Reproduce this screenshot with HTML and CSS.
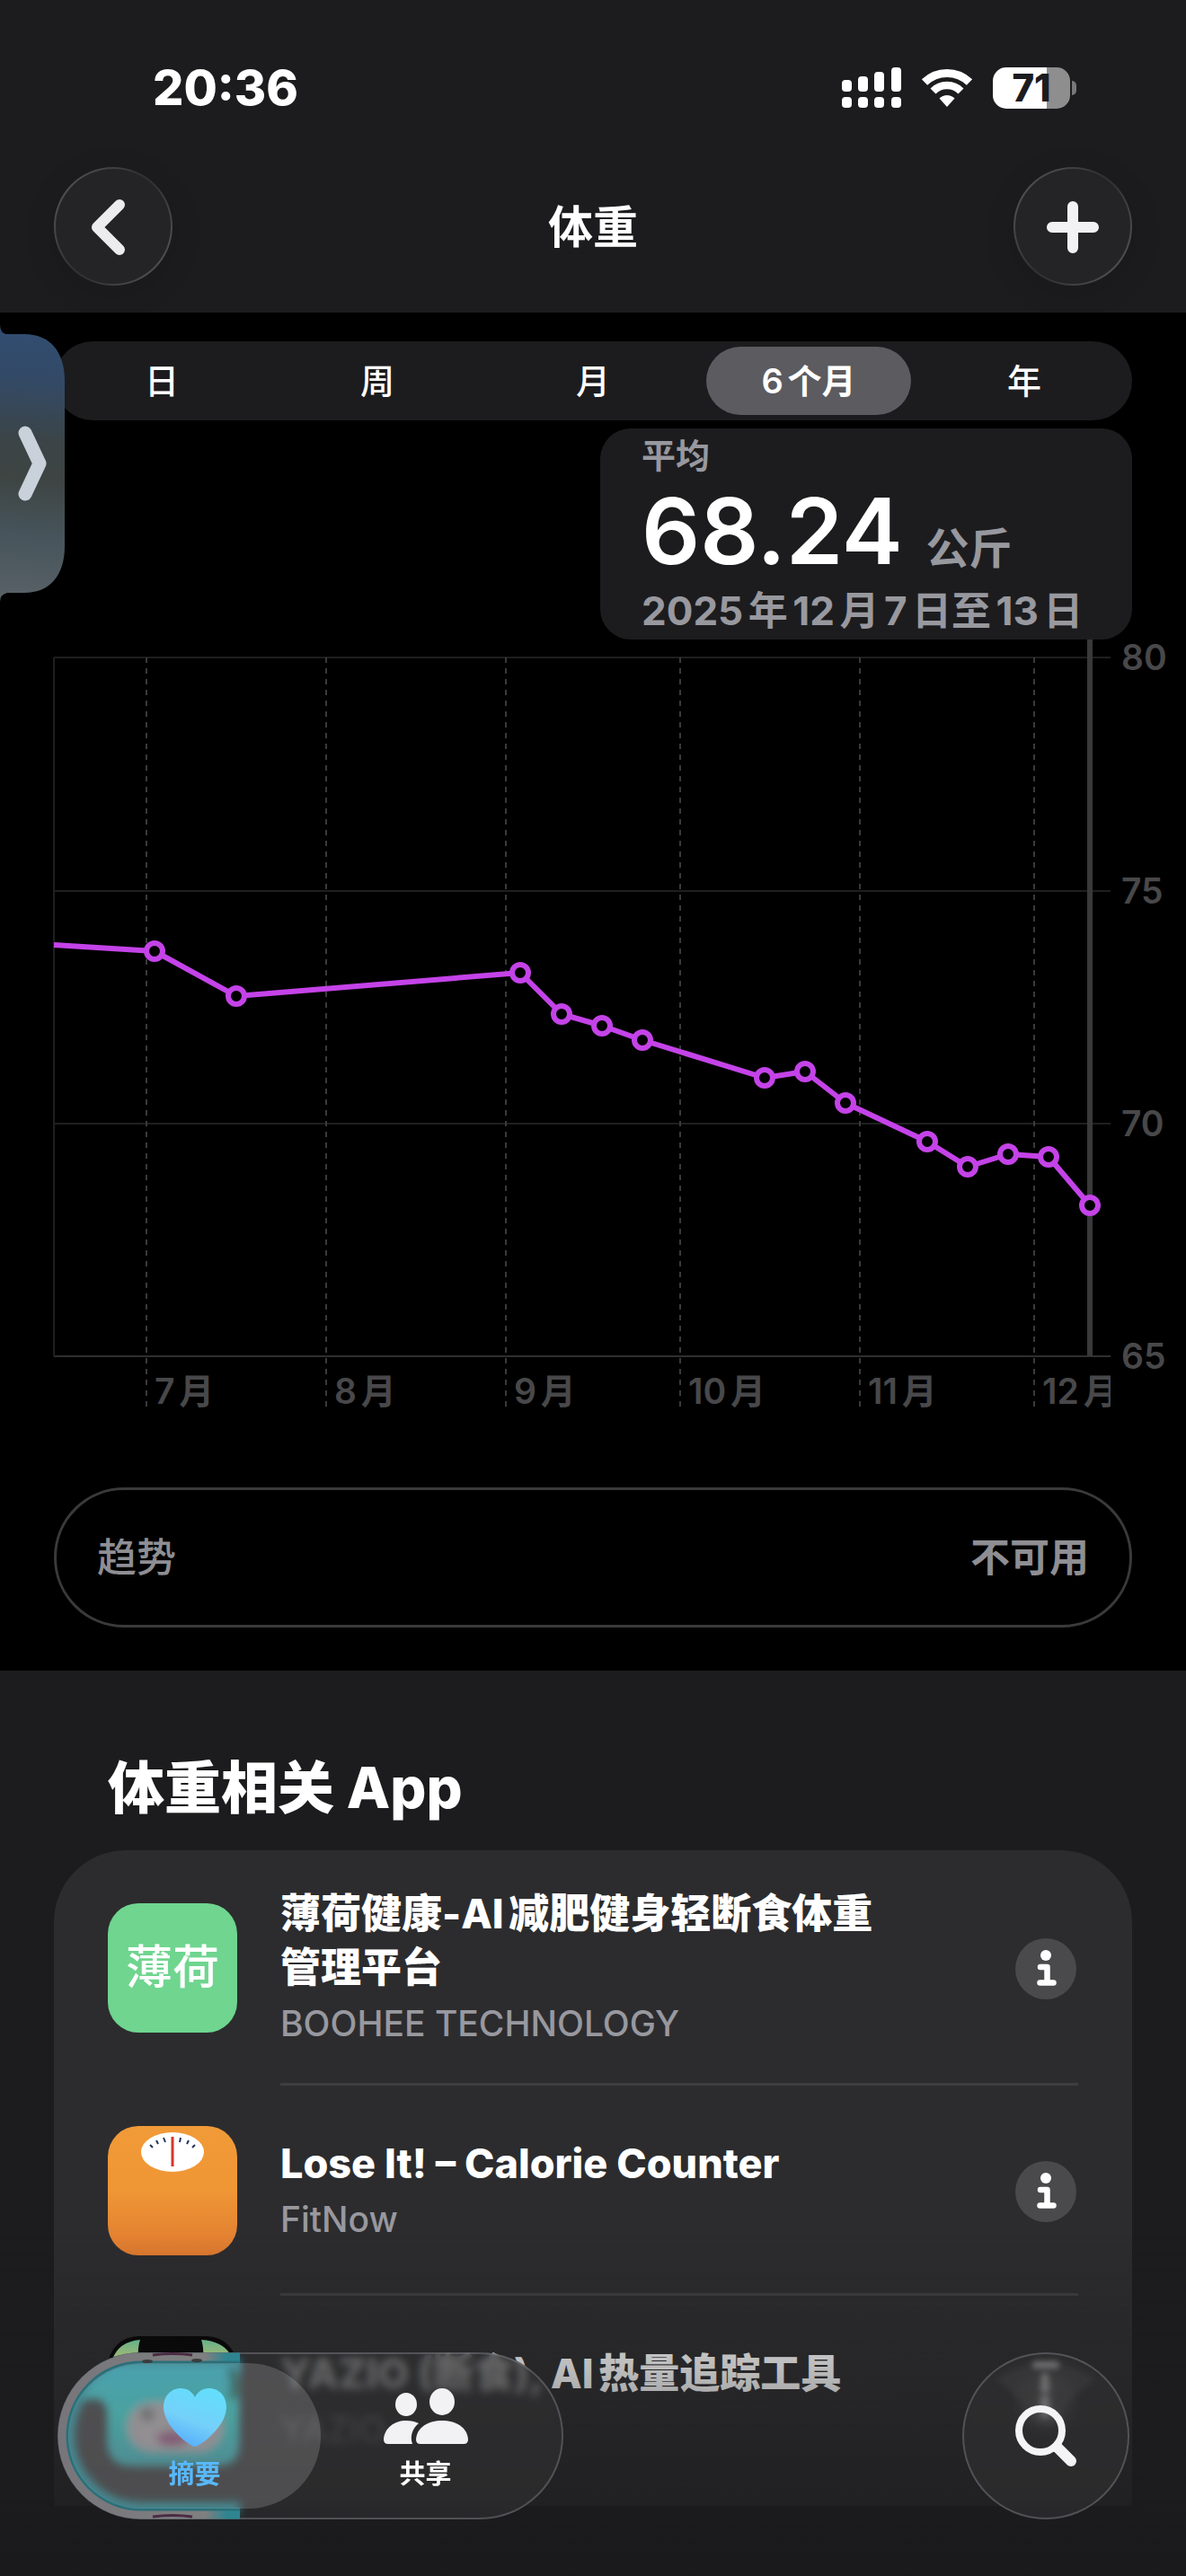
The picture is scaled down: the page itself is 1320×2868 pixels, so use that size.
FILE: index.html
```html
<!DOCTYPE html>
<html lang="zh-CN">
<head>
<meta charset="utf-8">
<meta name="viewport" content="width=device-width, initial-scale=1">
<title>体重</title>
<link rel="stylesheet" href="styles.css">
</head>
<body>
<header class="top">
  <div class="status">
    <time class="clock">20:36</time>
    <div class="status-icons">
      <svg width="66" height="46" viewBox="0 0 66 46" fill="#fff" aria-hidden="true">
        <rect x="0" y="14" width="11" height="13" rx="4"/><rect x="18" y="10" width="11" height="17" rx="4"/><rect x="36" y="5" width="11" height="22" rx="4"/><rect x="55" y="0" width="11" height="27" rx="4"/>
        <rect x="0" y="33" width="11" height="12" rx="4"/><rect x="18" y="33" width="11" height="12" rx="4"/><rect x="36" y="33" width="11" height="12" rx="4"/><rect x="55" y="33" width="11" height="12" rx="4"/>
      </svg>
      <svg width="58" height="44" viewBox="0 0 58 44" aria-hidden="true">
        <path d="M4 15.500a36 36 0 0 1 50 0" fill="none" stroke="#fff" stroke-width="9"/>
        <path d="M13.500 25.500a22 22 0 0 1 31 0" fill="none" stroke="#fff" stroke-width="8.500"/>
        <path d="M29 43 L20.500 33.500a12 12 0 0 1 17 0Z" fill="#fff"/>
      </svg>
      <div class="battery"><span class="battery-body">71</span><span class="battery-tip"></span></div>
    </div>
  </div>
  <div class="nav">
    <button class="round" aria-label="返回">
      <svg width="132" height="132" viewBox="0 0 132 132" fill="none" stroke="#ececee" stroke-width="12" stroke-linecap="round" stroke-linejoin="round"><path d="M73 42 L48 67 L73 92"/></svg>
    </button>
    <h1 class="nav-title">体重</h1>
    <button class="round" aria-label="添加">
      <svg width="132" height="132" viewBox="0 0 132 132" fill="none" stroke="#f2f2f5" stroke-width="12" stroke-linecap="round"><path d="M66 44v46M43 67h46"/></svg>
    </button>
  </div>
</header>

<main>
  <section class="chart-section">
    <div class="segments" role="group" aria-label="时间范围">
      <button class="segment">日</button>
      <button class="segment">周</button>
      <button class="segment">月</button>
      <button class="segment selected" aria-pressed="true">6个月</button>
      <button class="segment">年</button>
    </div>
    <div class="callout">
      <p class="callout-label">平均</p>
      <p class="callout-value">68.24 <span class="unit">公斤</span></p>
      <p class="callout-date">2025年12月7日至13日</p>
    </div>
    <svg class="chart" viewBox="0 0 1320 860" role="img" aria-label="体重折线图">
      <defs><clipPath id="plot"><rect x="60" y="0" width="1176" height="862"/></clipPath></defs>
      <g class="grid">
        <path d="M60 20H1236M60 280H1236M60 539H1236"/>
        <path class="base" d="M60 798H1236"/>
        <path d="M60 20V798"/>
      </g>
      <path class="months" d="M163 20V860M363 20V860M563 20V860M757 20V860M957 20V860M1151 20V860"/>
      <path class="cursor" d="M1213 0V798"/>
      <polyline class="line" points="60,340 172,347 263,397 579,371 625,417 670,430 715,446 851,488 896,481 941,516 1032,559 1077,587 1122,573 1167,576 1213,630"/>
      <g class="dots">
        <circle cx="172" cy="347" r="9"/><circle cx="263" cy="397" r="9"/><circle cx="579" cy="371" r="9"/><circle cx="625" cy="417" r="9"/><circle cx="670" cy="430" r="9"/><circle cx="715" cy="446" r="9"/><circle cx="851" cy="488" r="9"/><circle cx="896" cy="481" r="9"/><circle cx="941" cy="516" r="9"/><circle cx="1032" cy="559" r="9"/><circle cx="1077" cy="587" r="9"/><circle cx="1122" cy="573" r="9"/><circle cx="1167" cy="576" r="9"/><circle cx="1213" cy="630" r="9"/>
      </g>
      <g class="axis">
        <text x="1248" y="34">80</text><text x="1248" y="294">75</text><text x="1248" y="553">70</text><text x="1248" y="812">65</text>
      </g>
      <g class="axis" clip-path="url(#plot)">
        <text x="172" y="851">7月</text><text x="372" y="851">8月</text><text x="572" y="851">9月</text><text x="766" y="851">10月</text><text x="966" y="851">11月</text><text x="1160" y="851">12月</text>
      </g>
    </svg>
    <button class="trend"><span>趋势</span><strong>不可用</strong></button>
  </section>

  <section class="apps">
    <h2 class="apps-title">体重相关 App</h2>
    <ul class="app-list">
      <li class="app">
        <div class="app-icon mint">薄荷</div>
        <div class="app-body">
          <div class="app-text">
            <h3 class="app-name">薄荷健康-AI减肥健身轻断食体重管理平台</h3>
            <p class="app-maker">BOOHEE TECHNOLOGY</p>
          </div>
          <button class="info" aria-label="薄荷健康信息"><svg width="68" height="68" viewBox="0 0 68 68"><circle cx="34" cy="19" r="6" fill="#fff"/><path d="M28 32h7.500v17M27.500 49.500h15" fill="none" stroke="#fff" stroke-width="6.500" stroke-linecap="round" stroke-linejoin="round"/></svg></button>
        </div>
      </li>
      <li class="app">
        <svg class="app-icon" viewBox="0 0 144 144" aria-hidden="true">
          <defs><linearGradient id="scale" x2="0" y2="1"><stop offset="0" stop-color="#f19a38"/><stop offset=".5" stop-color="#ef9635"/><stop offset="1" stop-color="#df7a30"/></linearGradient></defs>
          <rect width="144" height="144" fill="url(#scale)"/>
          <ellipse cx="72" cy="29" rx="35" ry="22" fill="#fff"/>
          <path d="M47 21l3 3M54 16l2 4M62 13l2 5M81 13l-1 5M90 16l-2 4M97 21l-3 3" stroke="#23355c" stroke-width="2"/>
          <path d="M72 12v33" stroke="#d8352c" stroke-width="3"/>
        </svg>
        <div class="app-body">
          <div class="app-text">
            <h3 class="app-name">Lose It! – Calorie Counter</h3>
            <p class="app-maker">FitNow</p>
          </div>
          <button class="info" aria-label="Lose It! 信息"><svg width="68" height="68" viewBox="0 0 68 68"><circle cx="34" cy="19" r="6" fill="#fff"/><path d="M28 32h7.500v17M27.500 49.500h15" fill="none" stroke="#fff" stroke-width="6.500" stroke-linecap="round" stroke-linejoin="round"/></svg></button>
        </div>
      </li>
      <li class="app">
        <svg class="app-icon" viewBox="0 0 144 144" aria-hidden="true">
          <defs><linearGradient id="ear" x2="0" y2="1"><stop offset="0" stop-color="#7be0aa"/><stop offset="1" stop-color="#dcf694"/></linearGradient></defs>
          <rect width="144" height="144" fill="#050505"/>
          <path d="M5 26Q12 6 36 4Q33 12 34 26Z" fill="url(#ear)"/>
          <path d="M139 26Q132 6 104 4Q107 12 106 26Z" fill="url(#ear)"/>
          <path d="M0 30H144V144H0Z" fill="#38b5bd"/>
          <ellipse cx="72" cy="92" rx="50" ry="36" fill="#a9a3a5"/>
          <ellipse cx="72" cy="112" rx="15" ry="9" fill="#97456f"/>
          <circle cx="48" cy="80" r="7" fill="#555"/><circle cx="98" cy="80" r="7" fill="#555"/>
        </svg>
        <div class="app-body">
          <div class="app-text">
            <h3 class="app-name">YAZIO (断食), AI热量追踪工具</h3>
            <p class="app-maker">YAZIO</p>
          </div>
          <button class="info" aria-label="YAZIO 信息"><svg width="68" height="68" viewBox="0 0 68 68"><circle cx="34" cy="19" r="6" fill="#fff"/><path d="M28 32h7.500v17M27.500 49.500h15" fill="none" stroke="#fff" stroke-width="6.500" stroke-linecap="round" stroke-linejoin="round"/></svg></button>
        </div>
      </li>
    </ul>
  </section>
</main>

<button class="drawer" aria-label="展开侧栏">
  <svg width="72" height="312" viewBox="0 0 72 312">
    <defs><linearGradient id="drawer" gradientUnits="userSpaceOnUse" x1="36" y1="0" x2="16" y2="312"><stop offset="0" stop-color="#314d72"/><stop offset=".2" stop-color="#334a66"/><stop offset=".42" stop-color="#3b4447"/><stop offset=".55" stop-color="#3e4442"/><stop offset=".75" stop-color="#46545b"/><stop offset="1" stop-color="#5a6267"/></linearGradient></defs>
    <path d="M0 0Q0 12 8 12H27C56 12 72 32 72 64V248C72 280 56 300 27 300H8Q0 302 0 310Z" fill="url(#drawer)"/>
    <path d="M28 122L44 156L28 190" fill="none" stroke="#c9d1da" stroke-width="15" stroke-linecap="round" stroke-linejoin="round"/>
  </svg>
</button>

<div class="fade"></div>
<div class="dock">
  <nav class="tabs" aria-label="标签栏">
    <svg class="lens" viewBox="0 0 563 186" aria-hidden="true">
      <defs>
        <filter id="soft" x="-20%" y="-20%" width="140%" height="140%"><feGaussianBlur stdDeviation="5"/></filter>
        <linearGradient id="rim" gradientUnits="userSpaceOnUse" x1="0" y1="0" x2="205" y2="0"><stop offset="0" stop-color="#77757a"/><stop offset=".8" stop-color="#7f7f80"/><stop offset=".92" stop-color="#2e8590"/><stop offset="1" stop-color="#2e8590"/></linearGradient>
        <linearGradient id="pelt" x2="0" y2="1"><stop offset="0" stop-color="#268d9f"/><stop offset=".5" stop-color="#268f8c"/><stop offset="1" stop-color="#2b757c"/></linearGradient>
      </defs>
      <path d="M203 12H93A81 81 0 0 0 93 174H203" fill="none" stroke="#24727c" stroke-width="14" filter="url(#soft)"/>
      <g filter="url(#soft)">
        <path d="M66 12H202V104Q202 126 178 126H82Q58 126 56 104V66Q54 48 26 52Q36 24 66 12Z" fill="url(#pelt)"/>
        <path d="M192 18q8 12 3 34" fill="none" stroke="#1b4738" stroke-width="9"/>
        <rect x="78" y="56" width="106" height="54" rx="27" fill="#7c787b"/>
        <circle cx="100" cy="69" r="8" fill="#545456"/><circle cx="156" cy="69" r="8" fill="#545456"/>
        <ellipse cx="128" cy="96" rx="18" ry="9" fill="#6b3e5c"/>
      </g>
      <path d="M203 10H93A83 83 0 0 0 93 176H203" fill="none" stroke="#2a6f79" stroke-width="6"/>
      <path d="M203 5H93A88 88 0 0 0 93 181H203" fill="none" stroke="url(#rim)" stroke-width="9"/>
      <path d="M106 3q22 -3 44 0M106 183q22 -3 44 0" fill="none" stroke="#4a2b42" stroke-width="3"/>
      <ellipse cx="100" cy="10" rx="6" ry="2" fill="#3b3b3d"/><ellipse cx="155" cy="9" rx="6" ry="2" fill="#3b3b3d"/>
    </svg>
    <a class="tab current" href="#summary" aria-current="page">
      <svg width="94" height="66" viewBox="0 0 94 66" aria-hidden="true">
        <defs><linearGradient id="heart" x1=".8" x2=".4" y2="1"><stop offset="0" stop-color="#62dffc"/><stop offset=".6" stop-color="#74d0f9"/><stop offset="1" stop-color="#57aefb"/></linearGradient></defs>
        <path d="M47 65C42 65 12 43 12 21C12 9 20 0 31 0C39 0 44 4 47 10C50 4 55 0 63 0C74 0 82 9 82 21C82 43 52 65 47 65Z" fill="url(#heart)"/>
      </svg>
      <span>摘要</span>
    </a>
    <a class="tab" href="#sharing">
      <svg width="94" height="66" viewBox="0 0 94 66" fill="#f2f2f5" aria-hidden="true">
        <ellipse cx="25" cy="18" rx="12" ry="13"/><ellipse cx="65" cy="15" rx="14" ry="15"/>
        <path d="M5 62Q0 62 0 57C1 44 12 36 25 36Q33 36 39 39C32 45 29 53 32 62Z"/>
        <path d="M41 62Q36 62 36 57C37 43 50 36 65 36C80 36 93 43 94 57Q94 62 89 62Z"/>
      </svg>
      <span>共享</span>
    </a>
  </nav>
  <button class="search" aria-label="搜索">
    <svg width="186" height="186" viewBox="0 0 186 186" fill="none" aria-hidden="true">
      <defs><filter id="haze" x="-50%" y="-50%" width="200%" height="200%"><feGaussianBlur stdDeviation="3"/></filter></defs>
      <path d="M38 30Q93 -8 148 30L118 55Q112 80 93 82Q72 80 66 55Z" fill="#454547" opacity=".4" filter="url(#haze)"/>
      <path d="M82 14h22M92 27v14M92 52v16" stroke="#6e6e70" stroke-width="8" stroke-linecap="round" filter="url(#haze)"/>
      <g stroke="#f4f4f7" stroke-linecap="round"><circle cx="87" cy="87" r="24" stroke-width="8"/><path d="M106 106L121 121" stroke-width="12"/></g>
    </svg>
  </button>
</div>
</body>
</html>
```
FILE: styles.css
```css
* { box-sizing: border-box; }

body {
  margin: 0;
  min-height: 100vh;
  background: #1c1c1e;
  color: #fff;
  font-family: Inter, "Noto Sans CJK SC", sans-serif;
  text-autospace: normal;
}

h1, h2, h3, p, ul { margin: 0; padding: 0; }
ul { list-style: none; }
button { margin: 0; padding: 0; border: 0; background: none; color: inherit; font: inherit; text-autospace: inherit; }
a { color: inherit; text-decoration: none; }
svg { display: block; }

/* Status bar and navigation */
.top { padding: 54px 60px 30px; }
.status { display: flex; justify-content: space-between; align-items: center; height: 88px; padding: 0 62px 0 110px; }
.clock { font-size: 54px; font-weight: 800; line-height: 88px; }
.status-icons { display: flex; align-items: center; gap: 22px; }
.battery { display: flex; align-items: center; gap: 2px; }
.battery-body {
  width: 86px; height: 46px; border-radius: 15px;
  background: linear-gradient(90deg, #fff 70%, #8e8e8f 70%);
  color: #1c1c1e; font-size: 42px; font-weight: 800; line-height: 46px; text-align: center;
}
.battery-tip { width: 5px; height: 16px; border-radius: 0 5px 5px 0; background: #77777a; }
.nav { display: flex; justify-content: space-between; align-items: center; margin-top: 44px; }
.nav-title { padding-top: 2px; font-size: 50px; font-weight: 700; line-height: 60px; }
.round {
  width: 132px; height: 132px; border-radius: 50%; border: 2px solid transparent;
  background: linear-gradient(#242426, #242426) padding-box, linear-gradient(125deg, #5a5a5e, #323234 45%, #323234 55%, #5a5a5e) border-box;
  box-shadow: 0 8px 36px rgba(0, 0, 0, .12);
}
.round svg { margin: -2px; }

/* Chart */
.chart-section { padding: 32px 0 48px; background: #000; }
.segments { display: flex; height: 88px; margin: 0 60px; padding: 6px 0; border-radius: 44px; background: #1c1c1e; }
.segment { flex: 1; margin: 0 6px; border-radius: 38px; font-size: 38px; font-weight: 500; line-height: 76px; }
.segment.selected { background: #5b5b60; font-weight: 600; }
.callout { width: fit-content; min-width: 592px; margin: 9px 60px 0 auto; padding: 6px 46px 3px; border-radius: 34px; background: #1c1c1e; color: #98989f; font-weight: 700; }
.callout-label { font-size: 38px; line-height: 48px; }
.callout-value { color: #fff; font-size: 102px; font-weight: 600; line-height: 120px; }
.unit { color: #98989f; font-size: 48px; line-height: 60px; }
.callout-date { font-size: 44px; line-height: 58px; white-space: nowrap; }
.chart { width: 100%; height: auto; overflow: visible; }
.grid { fill: none; stroke: #1f1f20; stroke-width: 2; }
.base { stroke: #2f2f31; }
.months { fill: none; stroke: #3a3a3c; stroke-width: 2; stroke-dasharray: 6 6; }
.cursor { stroke: #39393b; stroke-width: 6; }
.line { fill: none; stroke: #c443e8; stroke-width: 6; stroke-linejoin: round; }
.dots { fill: #000; stroke: #c443e8; stroke-width: 6; }
.axis { fill: #48484a; font-size: 39px; font-weight: 600; }
.trend {
  display: flex; justify-content: space-between; align-items: center;
  width: calc(100% - 120px); height: 156px; margin: 84px 60px 0; padding: 0 45px;
  border: 3px solid #3a3a3c; border-radius: 78px; color: #8e8e93; font-size: 44px; font-weight: 500; line-height: 50px;
}
.trend strong { font-weight: 700; }

/* Related apps */
.apps { padding: 90px 60px 78px; }
.apps-title { margin-bottom: 30px; padding-left: 60px; font-size: 63px; font-weight: 800; line-height: 80px; }
.app-list { border-radius: 80px 80px 0 0; background: #2c2c2e; }
.app { display: flex; align-items: center; gap: 48px; padding: 0 60px; }
.app-icon { flex: none; width: 144px; height: 144px; border-radius: 34px; }
.mint { background: #6fd58f; font-size: 52px; font-weight: 500; line-height: 144px; text-align: center; }
.app-body { display: flex; flex: 1; justify-content: space-between; align-items: center; min-height: 234px; padding: 41px 0 37px; border-bottom: 3px solid #3e3e40; }
.app:last-child .app-body { border-color: transparent; }
.app-text { max-width: 680px; }
.app-name { font-size: 45px; font-weight: 800; line-height: 60px; }
.app-maker { margin-top: 3px; color: #98989f; font-size: 39px; font-weight: 500; line-height: 58px; }
.info { flex: none; width: 68px; height: 68px; margin-right: 2px; border-radius: 50%; background: #4a4a4c; }

/* Floating layers */
.drawer { position: absolute; top: 360px; left: 0; }
.fade { position: fixed; right: 0; bottom: 0; left: 0; height: 380px; background: linear-gradient(rgba(28, 28, 30, 0), rgba(28, 28, 30, .3) 40%, rgba(28, 28, 30, .65) 75%, rgba(26, 26, 28, .9)); pointer-events: none; }
.dock { position: fixed; right: 63px; bottom: 63px; left: 64px; display: flex; justify-content: space-between; }
.tabs, .search {
  position: relative; height: 186px; border-radius: 93px; overflow: hidden;
  background: rgba(48, 48, 50, .62); backdrop-filter: blur(5px);
  box-shadow: inset 0 0 0 2px rgba(130, 130, 138, .45);
}
.tabs { display: flex; width: 563px; padding: 12px; }
.search { width: 186px; }
.lens { position: absolute; inset: 0; width: 100%; height: 100%; }
.tab { position: relative; display: flex; flex: none; flex-direction: column; align-items: center; width: 281px; padding-top: 28px; border-radius: 81px; font-size: 29px; font-weight: 700; line-height: 36px; }
.tab span { margin-top: 12px; }
.tab + .tab { margin-left: -24px; }
.tab.current { background: rgba(255, 255, 255, .17); color: #58b8fb; }
```
